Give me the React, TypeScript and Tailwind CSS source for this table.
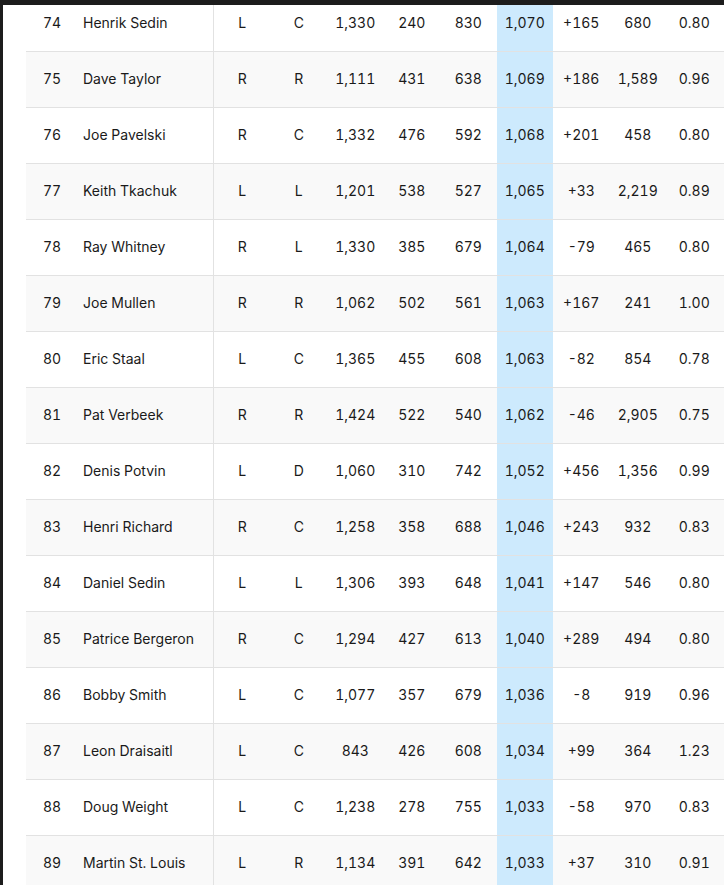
const rows: string[][] = [
  ["74", "Henrik Sedin", "L", "C", "1,330", "240", "830", "1,070", "+165", "680", "0.80"],
  ["75", "Dave Taylor", "R", "R", "1,111", "431", "638", "1,069", "+186", "1,589", "0.96"],
  ["76", "Joe Pavelski", "R", "C", "1,332", "476", "592", "1,068", "+201", "458", "0.80"],
  ["77", "Keith Tkachuk", "L", "L", "1,201", "538", "527", "1,065", "+33", "2,219", "0.89"],
  ["78", "Ray Whitney", "R", "L", "1,330", "385", "679", "1,064", "-79", "465", "0.80"],
  ["79", "Joe Mullen", "R", "R", "1,062", "502", "561", "1,063", "+167", "241", "1.00"],
  ["80", "Eric Staal", "L", "C", "1,365", "455", "608", "1,063", "-82", "854", "0.78"],
  ["81", "Pat Verbeek", "R", "R", "1,424", "522", "540", "1,062", "-46", "2,905", "0.75"],
  ["82", "Denis Potvin", "L", "D", "1,060", "310", "742", "1,052", "+456", "1,356", "0.99"],
  ["83", "Henri Richard", "R", "C", "1,258", "358", "688", "1,046", "+243", "932", "0.83"],
  ["84", "Daniel Sedin", "L", "L", "1,306", "393", "648", "1,041", "+147", "546", "0.80"],
  ["85", "Patrice Bergeron", "R", "C", "1,294", "427", "613", "1,040", "+289", "494", "0.80"],
  ["86", "Bobby Smith", "L", "C", "1,077", "357", "679", "1,036", "-8", "919", "0.96"],
  ["87", "Leon Draisaitl", "L", "C", "843", "426", "608", "1,034", "+99", "364", "1.23"],
  ["88", "Doug Weight", "L", "C", "1,238", "278", "755", "1,033", "-58", "970", "0.83"],
  ["89", "Martin St. Louis", "L", "R", "1,134", "391", "642", "1,033", "+37", "310", "0.91"],
];

export default function App() {
  return (
    <div className="flex h-[885px] w-[724px] flex-col overflow-hidden bg-[#1c1c1c] font-['Inter',sans-serif] text-sm text-[#1a1a1a]">
      <div className="h-[5px] shrink-0" />
      <div className="flex min-h-0 flex-1">
        <div className="w-[3px] shrink-0" />
        <div className="min-w-0 flex-1 overflow-hidden bg-white pl-[23px]">
          <div className="-mt-[9px] w-[760px]">
            {rows.map((r, i) => (
              <div
                key={r[0]}
                className={`flex h-[56px] items-stretch border-b border-[#e2e2e2] tabular-nums ${i % 2 === 1 ? "bg-[#f9f9f9]" : "bg-white"}`}
              >
                <div className="flex w-[52px] shrink-0 items-center justify-center pb-[2px]">{r[0]}</div>
                <div className="flex w-[136px] shrink-0 items-center border-r border-[#e2e2e2] pb-[2px] pl-[5px]">{r[1]}</div>
                {r.slice(2).map((v, j) => (
                  <div
                    key={j}
                    className={`flex w-[56.5px] shrink-0 items-center justify-center pb-[2px] ${j === 5 ? "bg-[#cdeafd]" : ""}`}
                  >
                    {v}
                  </div>
                ))}
              </div>
            ))}
          </div>
        </div>
      </div>
    </div>
  );
}
